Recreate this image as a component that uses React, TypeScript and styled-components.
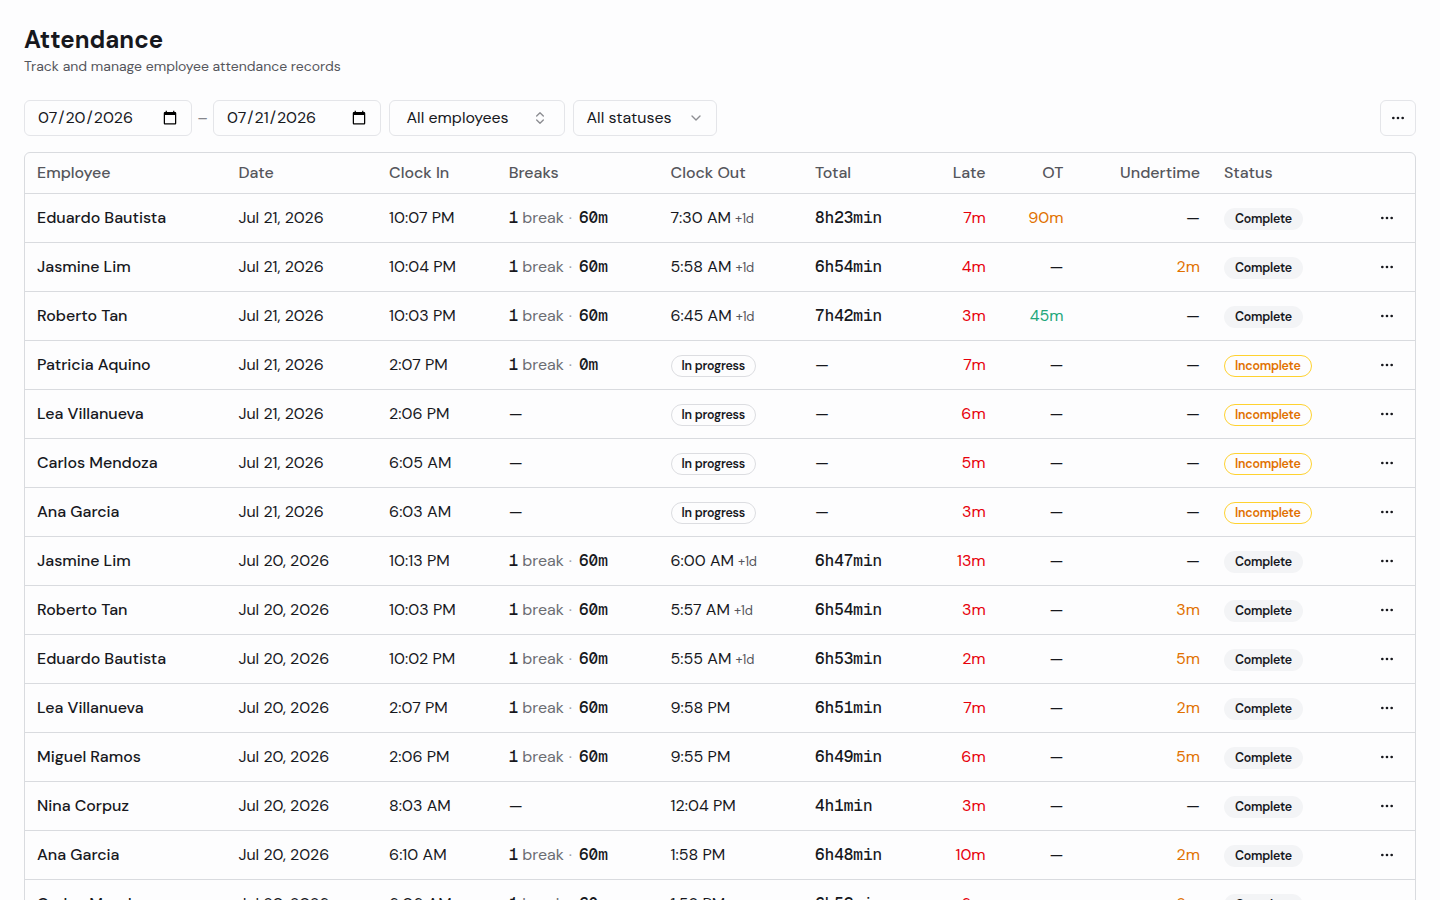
import React from 'react'
import styled, { createGlobalStyle } from "styled-components";
import { ChevronDown, ChevronsUpDown, Ellipsis } from 'lucide-react';

const GlobalStyle = createGlobalStyle`
    *, *::before, *::after{
        box-sizing: border-box;
    }
    body{
        margin: 0;
        height: 900px;
        overflow: hidden;
        background: #fdfdfe;
        color: #17181d;
        font-family: "DM Sans", Inter, sans-serif;
        font-size: 16px;
        line-height: 24px;
    }
`;

type Row = {
    name: string;
    date: string;
    clockIn: string;
    breaks?: string;
    clockOut?: string;
    nextDay?: boolean;
    total?: string;
    late: string;
    ot?: string;
    otColor?: string;
    undertime?: string;
};

const rows: Row[] = [
    { name: 'Eduardo Bautista', date: 'Jul 21, 2026', clockIn: '10:07 PM', breaks: '60m', clockOut: '7:30 AM', nextDay: true, total: '8h23min', late: '7m', ot: '90m', otColor: '#e17100' },
    { name: 'Jasmine Lim', date: 'Jul 21, 2026', clockIn: '10:04 PM', breaks: '60m', clockOut: '5:58 AM', nextDay: true, total: '6h54min', late: '4m', undertime: '2m' },
    { name: 'Roberto Tan', date: 'Jul 21, 2026', clockIn: '10:03 PM', breaks: '60m', clockOut: '6:45 AM', nextDay: true, total: '7h42min', late: '3m', ot: '45m', otColor: '#22a67a' },
    { name: 'Patricia Aquino', date: 'Jul 21, 2026', clockIn: '2:07 PM', breaks: '0m', late: '7m' },
    { name: 'Lea Villanueva', date: 'Jul 21, 2026', clockIn: '2:06 PM', late: '6m' },
    { name: 'Carlos Mendoza', date: 'Jul 21, 2026', clockIn: '6:05 AM', late: '5m' },
    { name: 'Ana Garcia', date: 'Jul 21, 2026', clockIn: '6:03 AM', late: '3m' },
    { name: 'Jasmine Lim', date: 'Jul 20, 2026', clockIn: '10:13 PM', breaks: '60m', clockOut: '6:00 AM', nextDay: true, total: '6h47min', late: '13m' },
    { name: 'Roberto Tan', date: 'Jul 20, 2026', clockIn: '10:03 PM', breaks: '60m', clockOut: '5:57 AM', nextDay: true, total: '6h54min', late: '3m', undertime: '3m' },
    { name: 'Eduardo Bautista', date: 'Jul 20, 2026', clockIn: '10:02 PM', breaks: '60m', clockOut: '5:55 AM', nextDay: true, total: '6h53min', late: '2m', undertime: '5m' },
    { name: 'Lea Villanueva', date: 'Jul 20, 2026', clockIn: '2:07 PM', breaks: '60m', clockOut: '9:58 PM', total: '6h51min', late: '7m', undertime: '2m' },
    { name: 'Miguel Ramos', date: 'Jul 20, 2026', clockIn: '2:06 PM', breaks: '60m', clockOut: '9:55 PM', total: '6h49min', late: '6m', undertime: '5m' },
    { name: 'Nina Corpuz', date: 'Jul 20, 2026', clockIn: '8:03 AM', clockOut: '12:04 PM', total: '4h1min', late: '3m' },
    { name: 'Ana Garcia', date: 'Jul 20, 2026', clockIn: '6:10 AM', breaks: '60m', clockOut: '1:58 PM', total: '6h48min', late: '10m', undertime: '2m' },
    { name: 'Carlos Mendoza', date: 'Jul 20, 2026', clockIn: '6:06 AM', breaks: '60m', clockOut: '1:58 PM', total: '6h52min', late: '6m', undertime: '2m' },
];

const App = () => {


return (
  <Page>
    <GlobalStyle />
    <Title>Attendance</Title>
    <Subtitle>Track and manage employee attendance records</Subtitle>
    <Toolbar>
        <DateInput type="date" defaultValue="2026-07-20" />
        <Separator>–</Separator>
        <DateInput type="date" defaultValue="2026-07-21" />
        <Select $width={176} $pad={17}>
            <span>All employees</span>
            <ChevronsUpDown size={16} />
        </Select>
        <Select $width={144} $pad={13}>
            <span>All statuses</span>
            <ChevronDown size={16} />
        </Select>
        <MoreButton aria-label="More">
            <Ellipsis size={16} />
        </MoreButton>
    </Toolbar>
    <TableFrame>
        <Table>
            <colgroup>
                <Col $width={201.4} />
                <Col $width={150.7} />
                <Col $width={119.6} />
                <Col $width={161.9} />
                <Col $width={144.4} />
                <Col $width={125.7} />
                <Col $width={69} />
                <Col $width={77.8} />
                <Col $width={136.5} />
                <Col $width={142} />
                <Col $width={61} />
            </colgroup>
            <thead>
                <tr>
                    <Head>Employee</Head>
                    <Head>Date</Head>
                    <Head>Clock In</Head>
                    <Head>Breaks</Head>
                    <Head>Clock Out</Head>
                    <Head>Total</Head>
                    <Head $right>Late</Head>
                    <Head $right>OT</Head>
                    <Head $right>Undertime</Head>
                    <Head>Status</Head>
                    <Head />
                </tr>
            </thead>
            <tbody>
                {rows.map((row) => (
                    <tr key={row.name + row.date}>
                        <NameCell>{row.name}</NameCell>
                        <Cell>{row.date}</Cell>
                        <Cell>{row.clockIn}</Cell>
                        <Cell>
                            {row.breaks ? (
                                <Breaks>
                                    <Mono>1</Mono>
                                    <Muted>break</Muted>
                                    <Dot>·</Dot>
                                    <Mono>{row.breaks}</Mono>
                                </Breaks>
                            ) : '—'}
                        </Cell>
                        <Cell>
                            {row.clockOut ? (
                                <>{row.clockOut}{row.nextDay && <NextDay>+1d</NextDay>}</>
                            ) : <Badge $kind="outline">In progress</Badge>}
                        </Cell>
                        <Cell>{row.total ? <Mono>{row.total}</Mono> : '—'}</Cell>
                        <Cell $right $color="#e7000b">{row.late}</Cell>
                        <Cell $right $color={row.otColor}>{row.ot || '—'}</Cell>
                        <Cell $right $color={row.undertime && '#e17100'}>{row.undertime || '—'}</Cell>
                        <Cell>
                            {row.clockOut
                                ? <Badge $kind="filled">Complete</Badge>
                                : <Badge $kind="warning">Incomplete</Badge>}
                        </Cell>
                        <ActionCell>
                            <RowButton aria-label="Row actions">
                                <Ellipsis size={16} />
                            </RowButton>
                        </ActionCell>
                    </tr>
                ))}
            </tbody>
        </Table>
    </TableFrame>
  </Page>
)

};

const Page = styled.main`
    padding: 24px;
`;
const Title = styled.h1`
    margin: 0;
    font-size: 24px;
    line-height: 32px;
    font-weight: 700;
`;
const Subtitle = styled.p`
    margin: 0 0 24px;
    font-size: 14px;
    line-height: 20px;
    color: #55565c;
`;
const Toolbar = styled.div`
    display: flex;
    align-items: center;
    gap: 8px;
    height: 36px;
    margin-bottom: 16px;
`;
const DateInput = styled.input`
    width: 168px;
    height: 36px;
    padding: 4px 11px 4px 12px;
    border: 1px solid #e4e5e9;
    border-radius: 6px;
    background: transparent;
    color: inherit;
    font: inherit;
`;
const Separator = styled.span`
    width: 5px;
    display: flex;
    justify-content: center;
    color: #85868c;
`;
const Select = styled.button<{ $width: number; $pad: number }>`
    display: flex;
    align-items: center;
    justify-content: space-between;
    width: ${p => p.$width}px;
    height: 36px;
    padding: 0 ${p => p.$pad - 1}px 0 ${p => p.$pad - 0.5}px;
    border: 1px solid #e4e5e9;
    border-radius: 6px;
    background: transparent;
    color: inherit;
    font: inherit;
    svg{
        color: #8c8d92;
    }
`;
const MoreButton = styled.button`
    display: flex;
    align-items: center;
    justify-content: center;
    width: 36px;
    height: 36px;
    margin-left: auto;
    padding: 0;
    border: 1px solid #e4e5e9;
    border-radius: 6px;
    background: transparent;
    color: inherit;
`;
const TableFrame = styled.div`
    border: 1px solid #d9dbdf;
    border-radius: 6px;
    overflow: hidden;
`;
const Table = styled.table`
    width: 100%;
    table-layout: fixed;
    border-spacing: 0;
    white-space: nowrap;
`;
const Col = styled.col<{ $width: number }>`
    width: ${p => p.$width}px;
`;
const Head = styled.th<{ $right?: boolean }>`
    height: 41px;
    padding: 0 12px;
    border-bottom: 1px solid #d9dbdf;
    text-align: ${p => p.$right ? 'right' : 'left'};
    font-weight: 500;
    color: #55565c;
`;
const Cell = styled.td<{ $right?: boolean; $color?: string }>`
    height: 49px;
    padding: 0 12px;
    border-bottom: 1px solid #d9dbdf;
    text-align: ${p => p.$right ? 'right' : 'left'};
    color: ${p => p.$color || 'inherit'};
`;
const NameCell = styled(Cell)`
    font-weight: 500;
`;
const ActionCell = styled(Cell)`
    padding: 0 12px 0 0;
`;
const Breaks = styled.div`
    display: flex;
    align-items: center;
    gap: 4px;
`;
const Mono = styled.span`
    font-family: "Geist Mono", "DejaVu Sans Mono", monospace;
    font-weight: 500;
`;
const Muted = styled.span`
    color: #6b6c72;
`;
const Dot = styled.span`
    margin: 0 3px 0 1px;
    color: #a0a1a6;
`;
const NextDay = styled.span`
    margin-left: 4px;
    font-size: 13px;
    letter-spacing: -0.25px;
    color: #55565c;
`;
const Badge = styled.span<{ $kind: 'outline' | 'filled' | 'warning' }>`
    display: inline-flex;
    align-items: center;
    height: 22px;
    padding: 0 10px;
    border: 1px solid ${p => ({ outline: '#dcdde1', filled: 'transparent', warning: '#ffd230' })[p.$kind]};
    border-radius: 11px;
    background: ${p => p.$kind === 'filled' ? '#f3f4f6' : 'transparent'};
    color: ${p => p.$kind === 'warning' ? '#e17100' : 'inherit'};
    font-size: 12.4px;
    line-height: 16px;
    font-weight: 600;
    letter-spacing: -0.22px;
`;
const RowButton = styled.button`
    display: flex;
    align-items: center;
    justify-content: center;
    width: 32px;
    height: 32px;
    margin-left: auto;
    padding: 0;
    border: 0;
    background: transparent;
    color: inherit;
`;

export default App;
